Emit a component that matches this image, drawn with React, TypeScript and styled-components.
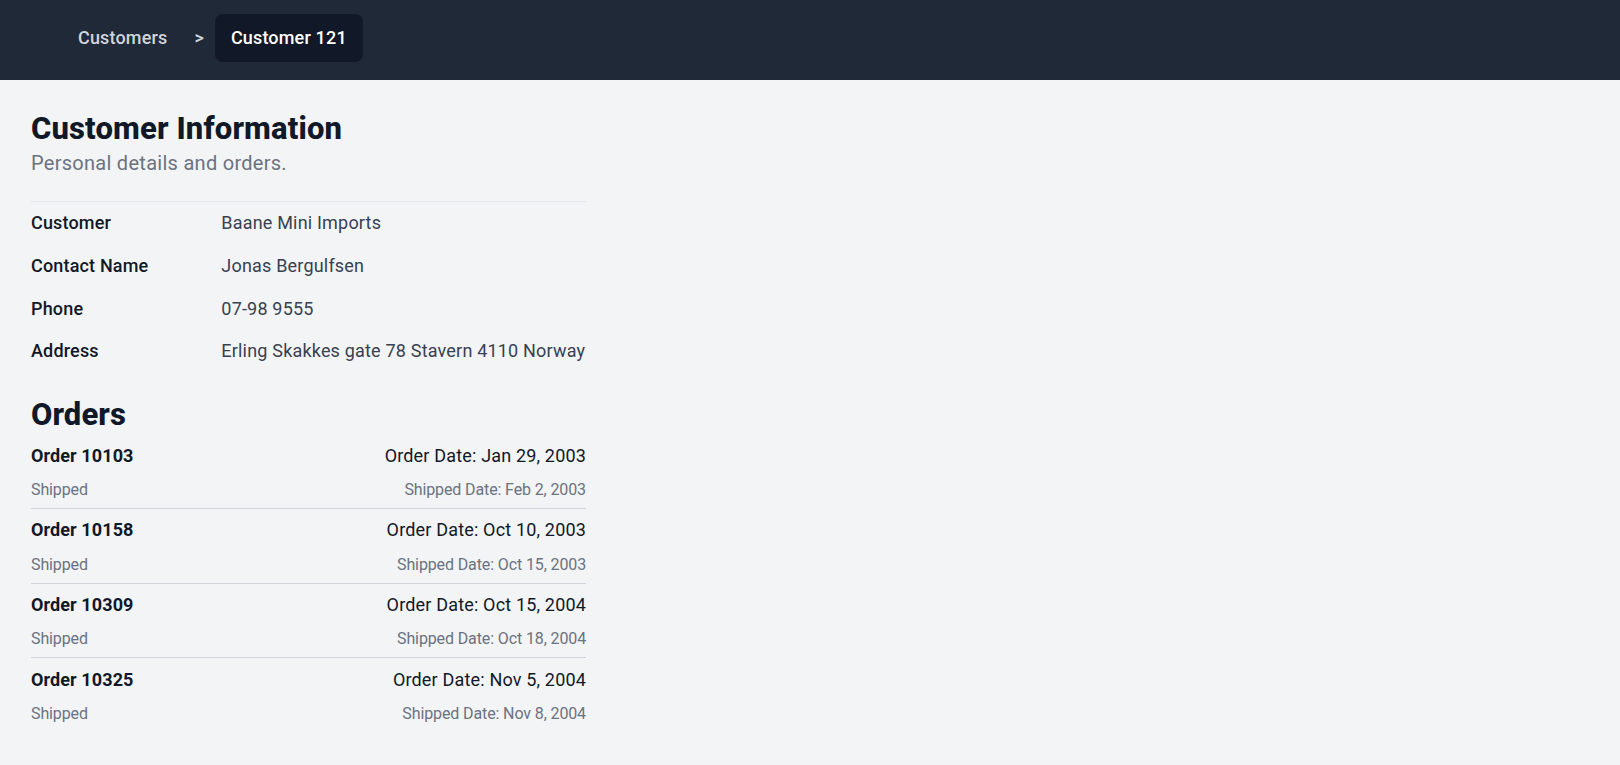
import React from "react";
import styled, { createGlobalStyle } from "styled-components";

const GlobalStyle = createGlobalStyle`
  * { box-sizing: border-box; }
  html, body { margin: 0; padding: 0; }
  body {
    background: #f3f4f6;
    font-family: Roboto, "Noto Sans", "Liberation Sans", sans-serif;
    color: #111827;
  }
`;

const Header = styled.header`
  height: 80px;
  background: #1f2937;
  display: flex;
  align-items: flex-start;
  padding: 14px 0 0 62px;
`;

const Crumbs = styled.nav`
  display: flex;
  align-items: center;
`;

const CrumbLink = styled.a<{ $current?: boolean }>`
  display: block;
  padding: 10px 16px;
  font-size: 18px;
  line-height: 28px;
  font-weight: 500;
  letter-spacing: 0.17px;
  text-decoration: none;
  border-radius: 8px;
  color: ${(p) => (p.$current ? "#ffffff" : "#d1d5db")};
  background: ${(p) => (p.$current ? "#111827" : "transparent")};
`;

const Separator = styled.span`
  margin: 0 11px 0 11px;
  font-size: 18px;
  line-height: 28px;
  color: #d1d5db;
  font-weight: 500;
`;

const Main = styled.main`
  padding: 30.5px 31px 40px;
`;

const Content = styled.div`
  width: 555px;
`;

const Title = styled.h1`
  margin: 0;
  font-size: 31px;
  line-height: 36px;
  font-weight: 800;
  letter-spacing: 0.15px;
  color: #111827;
`;

const Subtitle = styled.p`
  margin: 2.5px 0 0;
  font-size: 20px;
  line-height: 28px;
  letter-spacing: 0.28px;
  color: #6b7280;
`;

const DetailList = styled.dl`
  margin: 24px 0 0;
  border-top: 1px solid #e5e7eb;
`;

const DetailRow = styled.div`
  display: grid;
  grid-template-columns: repeat(3, 1fr);
  column-gap: 16px;
  padding: 7.33px 0;
`;

const Label = styled.dt`
  font-size: 18px;
  line-height: 28px;
  font-weight: 500;
  letter-spacing: 0.17px;
  color: #111827;
`;

const Value = styled.dd`
  margin: 0;
  grid-column: span 2;
  font-size: 18px;
  line-height: 28px;
  letter-spacing: 0.19px;
  color: #374151;
  white-space: nowrap;
`;

const OrdersTitle = styled.h2`
  margin: 24px 0 0;
  font-size: 31px;
  line-height: 36px;
  font-weight: 800;
  letter-spacing: 0.1px;
  color: #111827;
`;

const OrderList = styled.ul`
  list-style: none;
  margin: 1.5px 0 0;
  padding: 0;
`;

const OrderItem = styled.li`
  padding: 7.5px 0 5.9px;
  border-bottom: 1px solid #d1d5db;
  &:last-child {
    border-bottom: none;
  }
`;

const OrderTop = styled.div`
  display: flex;
  justify-content: space-between;
  font-size: 18px;
  line-height: 28px;
  letter-spacing: 0.17px;
  color: #111827;
`;

const OrderName = styled.span`
  font-weight: 700;
  letter-spacing: 0.1px;
`;

const OrderBottom = styled.div`
  display: flex;
  justify-content: space-between;
  margin-top: 8.3px;
  font-size: 16px;
  line-height: 24px;
  letter-spacing: -0.12px;
  color: #6b7280;
`;

const details = [
  { label: "Customer", value: "Baane Mini Imports" },
  { label: "Contact Name", value: "Jonas Bergulfsen" },
  { label: "Phone", value: "07-98 9555" },
  { label: "Address", value: "Erling Skakkes gate 78 Stavern 4110 Norway" },
];

const orders = [
  { id: 10103, date: "Jan 29, 2003", status: "Shipped", shipped: "Feb 2, 2003" },
  { id: 10158, date: "Oct 10, 2003", status: "Shipped", shipped: "Oct 15, 2003" },
  { id: 10309, date: "Oct 15, 2004", status: "Shipped", shipped: "Oct 18, 2004" },
  { id: 10325, date: "Nov 5, 2004", status: "Shipped", shipped: "Nov 8, 2004" },
];

export default function App() {
  return (
    <>
      <GlobalStyle />
      <Header>
        <Crumbs>
          <CrumbLink href="#">Customers</CrumbLink>
          <Separator>&gt;</Separator>
          <CrumbLink href="#" $current>
            Customer 121
          </CrumbLink>
        </Crumbs>
      </Header>
      <Main>
        <Content>
          <Title>Customer Information</Title>
          <Subtitle>Personal details and orders.</Subtitle>
          <DetailList>
            {details.map((d) => (
              <DetailRow key={d.label}>
                <Label>{d.label}</Label>
                <Value>{d.value}</Value>
              </DetailRow>
            ))}
          </DetailList>
          <OrdersTitle>Orders</OrdersTitle>
          <OrderList>
            {orders.map((o) => (
              <OrderItem key={o.id}>
                <OrderTop>
                  <OrderName>Order {o.id}</OrderName>
                  <span>Order Date: {o.date}</span>
                </OrderTop>
                <OrderBottom>
                  <span>{o.status}</span>
                  <span>Shipped Date: {o.shipped}</span>
                </OrderBottom>
              </OrderItem>
            ))}
          </OrderList>
        </Content>
      </Main>
    </>
  );
}
